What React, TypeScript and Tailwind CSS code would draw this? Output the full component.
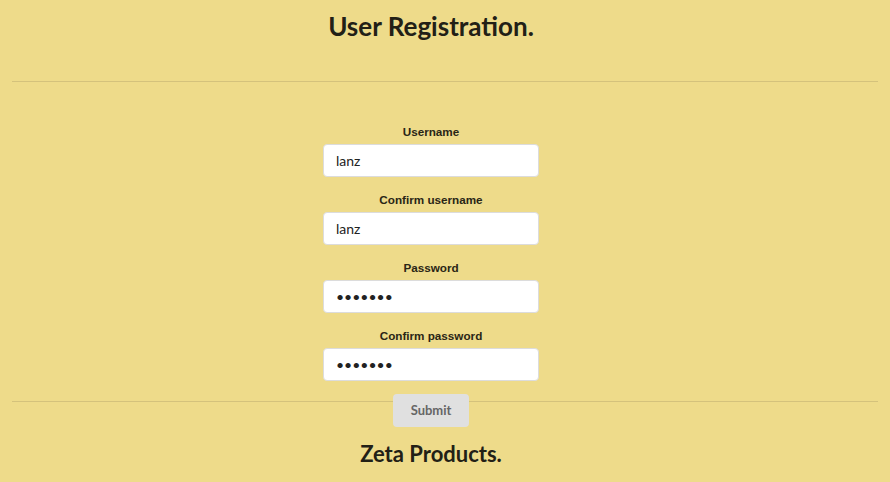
import { useState } from 'react'

// Registration form on a pale-yellow page
const lato = { fontFamily: 'Lato, "Open Sans", sans-serif' }

function Field({
  label,
  type = 'text',
  value,
  onChange,
}: {
  label: string
  type?: string
  value: string
  onChange: (v: string) => void
}) {
  return (
    <div className="flex flex-col items-center">
      <label className="font-['Liberation_Sans',Arial,sans-serif] text-[11.7px] font-bold leading-[13px] text-[#2a2616]">
        {label}
      </label>
      <input
        type={type}
        value={value}
        onChange={(e) => onChange(e.target.value)}
        className="mt-[6px] h-[33px] w-[216px] rounded-[4px] border border-[#dcdcdc] bg-white px-[12px] font-['Lato',sans-serif] text-[14px] text-[#222] outline-none"
      />
    </div>
  )
}

export default function App() {
  const [user, setUser] = useState('lanz')
  const [user2, setUser2] = useState('lanz')
  const [pw, setPw] = useState('1234567')
  const [pw2, setPw2] = useState('1234567')

  return (
    <div className="h-[482px] w-[890px] overflow-hidden bg-[#eedb8a] text-[#222016]" style={lato}>
      <div className="pr-[28px]">
        <h1 className="pt-[10px] text-center text-[26px] font-bold leading-[32px]">
          User Registration.
        </h1>
      </div>
      <hr className="mx-[12px] mt-[39px] border-t border-[#d4c27c]" />
      <div className="pr-[28px]">
        <div className="mt-[43px] flex flex-col items-center gap-[16px]">
          <Field label="Username" value={user} onChange={setUser} />
          <Field label="Confirm username" value={user2} onChange={setUser2} />
          <Field label="Password" type="password" value={pw} onChange={setPw} />
          <Field label="Confirm password" type="password" value={pw2} onChange={setPw2} />
        </div>
      </div>
      <hr className="mx-[12px] mt-[20px] border-t border-[#d4c27c]" />
      <div className="pr-[28px]">
        <div className="-mt-[8px] flex justify-center">
          <button
            type="button"
            className="relative h-[33px] w-[76px] rounded-[4px] bg-[#e0e0e0] text-[13px] font-bold text-[#666]"
          >
            Submit
          </button>
        </div>
        <h2 className="mt-[13px] text-center text-[22px] font-bold leading-[28px]">
          Zeta Products.
        </h2>
      </div>
    </div>
  )
}
